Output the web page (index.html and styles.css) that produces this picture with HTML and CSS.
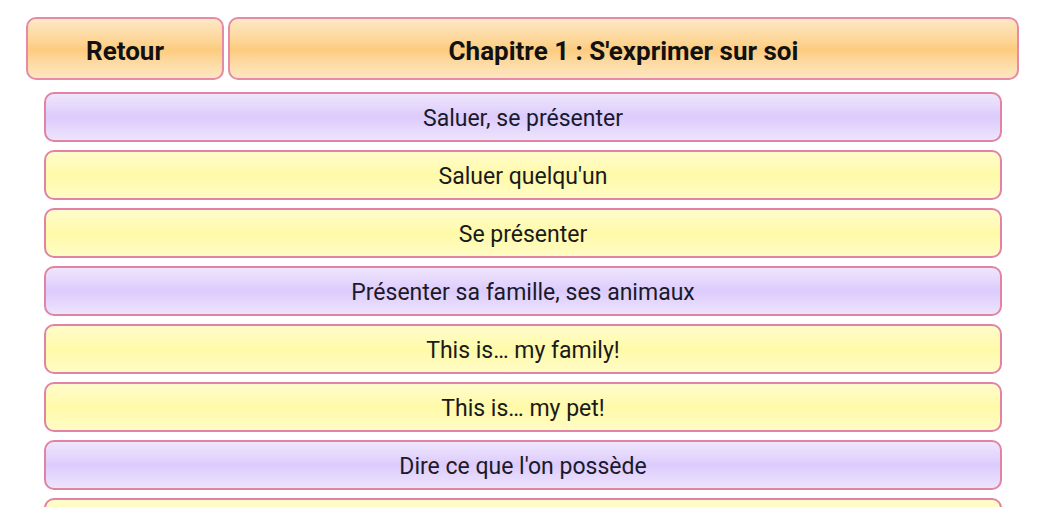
FILE: index.html
```html
<!DOCTYPE html>
<html lang="fr">
<head>
    <meta charset="UTF-8">
    <meta name="viewport" content="width=device-width, initial-scale=1.0">
    <title>Chapitre 1</title>
    <link rel="stylesheet" href="styles.css">
</head>
<body>
    <div class="header">
        <a href="#" class="btn btn-back">Retour</a>
        <div class="btn btn-title">Chapitre 1 : S'exprimer sur soi</div>
    </div>

    <div class="list">
        <a href="#" class="item section">Saluer, se présenter</a>
        <a href="#" class="item">Saluer quelqu'un</a>
        <a href="#" class="item">Se présenter</a>
        <a href="#" class="item section">Présenter sa famille, ses animaux</a>
        <a href="#" class="item">This is… my family!</a>
        <a href="#" class="item">This is… my pet!</a>
        <a href="#" class="item section">Dire ce que l'on possède</a>
        <a href="#" class="item"></a>
    </div>
</body>
</html>
```

FILE: styles.css
```css
* {
    margin: 0;
    padding: 0;
    box-sizing: border-box;
}

body {
    background: #ffffff;
    font-family: Roboto, 'Noto Sans', sans-serif;
    color: #111;
    height: 526px;
    overflow: hidden;
}

.header {
    display: flex;
    gap: 4px;
    padding: 17px 0 0 26px;
}

.btn {
    height: 63px;
    padding-top: 4px;
    border: 2px solid #e68aa6;
    border-radius: 10px;
    background: linear-gradient(180deg, #fde8c6 0%, #fdd594 38%, #fccb7e 52%, #fdd9a0 72%, #fee6c2 100%);
    display: flex;
    align-items: center;
    justify-content: center;
    font-weight: bold;
    font-size: 26px;
    color: #111;
    text-decoration: none;
}

.btn-back {
    width: 198px;
}

.btn-title {
    width: 791px;
}

.list {
    margin: 12px 0 0 44px;
    width: 958px;
    height: 415px;
    overflow: hidden;
    display: flex;
    flex-direction: column;
    gap: 8px;
}

.item {
    flex: none;
    height: 50px;
    padding-top: 3px;
    border: 2px solid #e283a4;
    border-radius: 10px;
    background: linear-gradient(180deg, #fffccc 0%, #fffaa8 50%, #fffcc6 100%);
    display: flex;
    align-items: center;
    justify-content: center;
    font-size: 23px;
    color: #1a1a1a;
    text-decoration: none;
}

.item.section {
    background: linear-gradient(180deg, #efe6fc 0%, #dccbfc 50%, #ede4fc 100%);
    color: #1a1a2a;
}
```
